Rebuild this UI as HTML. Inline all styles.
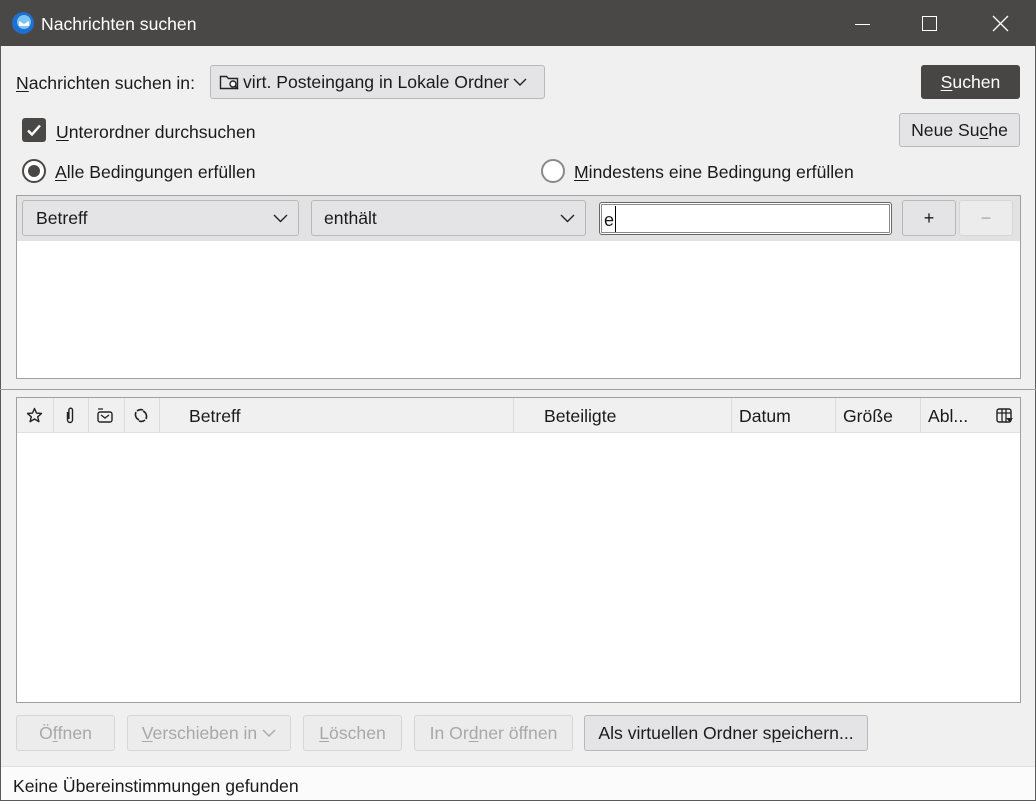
<!DOCTYPE html>
<html><head><meta charset="utf-8"><style>
*{box-sizing:border-box;margin:0;padding:0}
body{width:1036px;height:801px;overflow:hidden;font-family:"Liberation Sans",sans-serif;font-size:17.6px;color:#1a1a1a;background:#f0f0f0;position:relative}
.a{position:absolute}
.btn{position:absolute;background:#e4e4e6;border:1px solid #b8b8b8;border-radius:3px;display:flex;align-items:center;justify-content:center;white-space:nowrap}
.dis{background:#ececec;border-color:#d6d6d6;color:#a8a8a8}
.t{position:absolute;white-space:nowrap;line-height:20px}
u{text-decoration:underline;text-underline-offset:2px}
.hd{position:absolute;top:0;height:35px;line-height:36px;white-space:nowrap}
.vl{position:absolute;top:0;width:1px;height:35px;background:#dcdcdc}
</style></head><body>
<div class="a" style="left:0;top:0;width:1036px;height:801px;border:1px solid #5a5a5a"></div>
<div class="a" style="left:0;top:0;width:1036px;height:46px;background:#4a4846"></div>
<svg class="a" style="left:11px;top:11px" width="24" height="24" viewBox="0 0 24 24"><circle cx="12" cy="12" r="11" fill="#1f6fd0"/><circle cx="13" cy="11" r="7" fill="#7cc4f2"/><path d="M8 10l5 3 5-3v5H8z" fill="#fff"/></svg>
<div class="t" style="left:41px;top:14px;color:#fff;font-size:17.6px">Nachrichten suchen</div>
<div class="a" style="left:855px;top:24px;width:15px;height:1px;background:#fff"></div>
<div class="a" style="left:922px;top:16px;width:15px;height:15px;border:1px solid #fff"></div>
<svg class="a" style="left:992px;top:15px" width="17" height="17"><path d="M1 1L16 16M16 1L1 16" stroke="#fff" stroke-width="1.3"/></svg>

<div class="t" style="left:16px;top:73px"><u>N</u>achrichten suchen in:</div>
<div class="btn" style="left:210px;top:65px;width:335px;height:34px;justify-content:flex-start;padding-left:8px">
<svg width="22" height="18" viewBox="0 0 22 18"><path d="M1.5 3.5h6l2 2h9v10h-17z" fill="none" stroke="#222" stroke-width="1.4"/><circle cx="14" cy="11" r="3" fill="#fff" stroke="#222" stroke-width="1.4"/><path d="M16 13l3 3" stroke="#222" stroke-width="1.6"/></svg>
<span style="margin-left:2px">virt. Posteingang in Lokale Ordner</span>
<svg style="margin-left:4px" width="14" height="9"><path d="M1 1l6 6 6-6" fill="none" stroke="#222" stroke-width="1.4"/></svg></div>
<div class="btn" style="left:921px;top:65px;width:99px;height:34px;background:#484644;border-color:#484644;color:#fff"><span><u>S</u>uchen</span></div>

<div class="a" style="left:22px;top:118px;width:24px;height:24px;background:#4a4846;border-radius:3px"></div>
<svg class="a" style="left:22px;top:118px" width="24" height="24"><path d="M6 12.5l4 4 8-9" fill="none" stroke="#fff" stroke-width="2.4"/></svg>
<div class="t" style="left:56px;top:122px"><u>U</u>nterordner durchsuchen</div>
<div class="btn" style="left:899px;top:113px;width:121px;height:34px">Neue Su<u>c</u>he</div>

<div class="a" style="left:22px;top:159px;width:24px;height:24px;border:2px solid #4a4846;border-radius:50%;background:#fff"></div>
<div class="a" style="left:28px;top:165px;width:12px;height:12px;border-radius:50%;background:#4a4846"></div>
<div class="t" style="left:55px;top:162px"><u>A</u>lle Bedingungen erfüllen</div>
<div class="a" style="left:541px;top:159px;width:24px;height:24px;border:2px solid #8a8a8a;border-radius:50%;background:#fff"></div>
<div class="t" style="left:574px;top:162px"><u>M</u>indestens eine Bedingung erfüllen</div>

<div class="a" style="left:16px;top:195px;width:1005px;height:184px;border:1px solid #a0a0a0;background:#fff"></div>
<div class="a" style="left:17px;top:196px;width:1003px;height:45px;background:#e2e2e2"></div>
<div class="btn" style="left:22px;top:200px;width:277px;height:36px;justify-content:space-between;padding:0 10px 0 13px"><span>Betreff</span><svg width="15" height="9"><path d="M1 1l6.5 6.5L14 1" fill="none" stroke="#222" stroke-width="1.4"/></svg></div>
<div class="btn" style="left:311px;top:200px;width:275px;height:36px;justify-content:space-between;padding:0 10px 0 12px"><span>enthält</span><svg width="15" height="9"><path d="M1 1l6.5 6.5L14 1" fill="none" stroke="#222" stroke-width="1.4"/></svg></div>
<div class="a" style="left:599px;top:202px;width:293px;height:33px;background:#fff;border:1px solid #666;border-radius:3px;box-shadow:inset 0 0 0 1px #fff,inset 0 0 0 2px #888"></div>
<div class="t" style="left:604px;top:210px;font-size:18px">e</div>
<div class="a" style="left:615px;top:206px;width:1px;height:26px;background:#000"></div>
<div class="btn" style="left:902px;top:200px;width:54px;height:36px;font-size:18px">+</div>
<div class="btn dis" style="left:959px;top:200px;width:54px;height:36px;font-size:18px">−</div>

<div class="a" style="left:0;top:389px;width:1036px;height:1px;background:#a0a0a0"></div>

<div class="a" style="left:16px;top:397px;width:1005px;height:306px;border:1px solid #a0a0a0;background:#fff"></div>
<div class="a" style="left:17px;top:398px;width:1003px;height:35px;background:#f0f0f0;border-bottom:1px solid #e0e0e0">
<svg class="a" style="left:9px;top:9px" width="17" height="17" viewBox="0 0 17 17"><path d="M8.5 1.5l2 4.6 5 .4-3.8 3.3 1.2 4.9-4.4-2.7-4.4 2.7 1.2-4.9L1.5 6.5l5-.4z" fill="none" stroke="#222" stroke-width="1.4" stroke-linejoin="round"/></svg>
<svg class="a" style="left:47px;top:8px" width="12" height="19"><path d="M3.5 6v8a2.5 2.5 0 005 0V4a1.8 1.8 0 00-3.6 0v9" fill="none" stroke="#222" stroke-width="1.4"/></svg>
<svg class="a" style="left:79px;top:9px" width="18" height="17"><rect x="2" y="5" width="14" height="10" rx="2" fill="none" stroke="#222" stroke-width="1.4"/><path d="M5 8l4 3 4-3M2 2h5" stroke="#222" stroke-width="1.3" fill="none"/></svg>
<svg class="a" style="left:116px;top:9px" width="16" height="17"><path d="M4 4a6 6 0 016-1M12 13a6 6 0 01-6 1M3 5a6 6 0 003 8M13 12a6 6 0 00-3-8" fill="none" stroke="#222" stroke-width="1.6"/></svg>
<div class="vl" style="left:36px"></div><div class="vl" style="left:71px"></div><div class="vl" style="left:107px"></div><div class="vl" style="left:142px"></div>
<div class="hd" style="left:172px">Betreff</div><div class="vl" style="left:496px"></div>
<div class="hd" style="left:527px">Beteiligte</div><div class="vl" style="left:714px"></div>
<div class="hd" style="left:722px">Datum</div><div class="vl" style="left:818px"></div>
<div class="hd" style="left:826px">Größe</div><div class="vl" style="left:903px"></div>
<div class="hd" style="left:911px">Abl...</div>
<svg class="a" style="left:979px;top:10px" width="18" height="16"><rect x="1" y="1" width="14" height="13" rx="2" fill="none" stroke="#222" stroke-width="1.4"/><path d="M1 5h14M6 1v13M10 1v13" stroke="#222" stroke-width="1.3"/><path d="M10 10h7l-3.5 4z" fill="#222"/></svg>
</div>

<div class="btn dis" style="left:16px;top:715px;width:99px;height:36px">Ö<u>f</u>fnen</div>
<div class="btn dis" style="left:127px;top:715px;width:164px;height:36px"><span><u>V</u>erschieben in</span><svg style="margin-left:5px" width="14" height="9"><path d="M1 1l6 6 6-6" fill="none" stroke="#a8a8a8" stroke-width="1.4"/></svg></div>
<div class="btn dis" style="left:303px;top:715px;width:99px;height:36px"><span><u>L</u>öschen</span></div>
<div class="btn dis" style="left:414px;top:715px;width:159px;height:36px"><span>In Or<u>d</u>ner öffnen</span></div>
<div class="btn" style="left:584px;top:715px;width:284px;height:36px"><span>Als virtuellen Ordner s<u>p</u>eichern...</span></div>

<div class="a" style="left:1px;top:766px;width:1034px;height:34px;background:#fbfbfb;border-top:1px solid #e0e0e0"></div>
<div class="t" style="left:13px;top:776px">Keine Übereinstimmungen gefunden</div>
</body></html>
